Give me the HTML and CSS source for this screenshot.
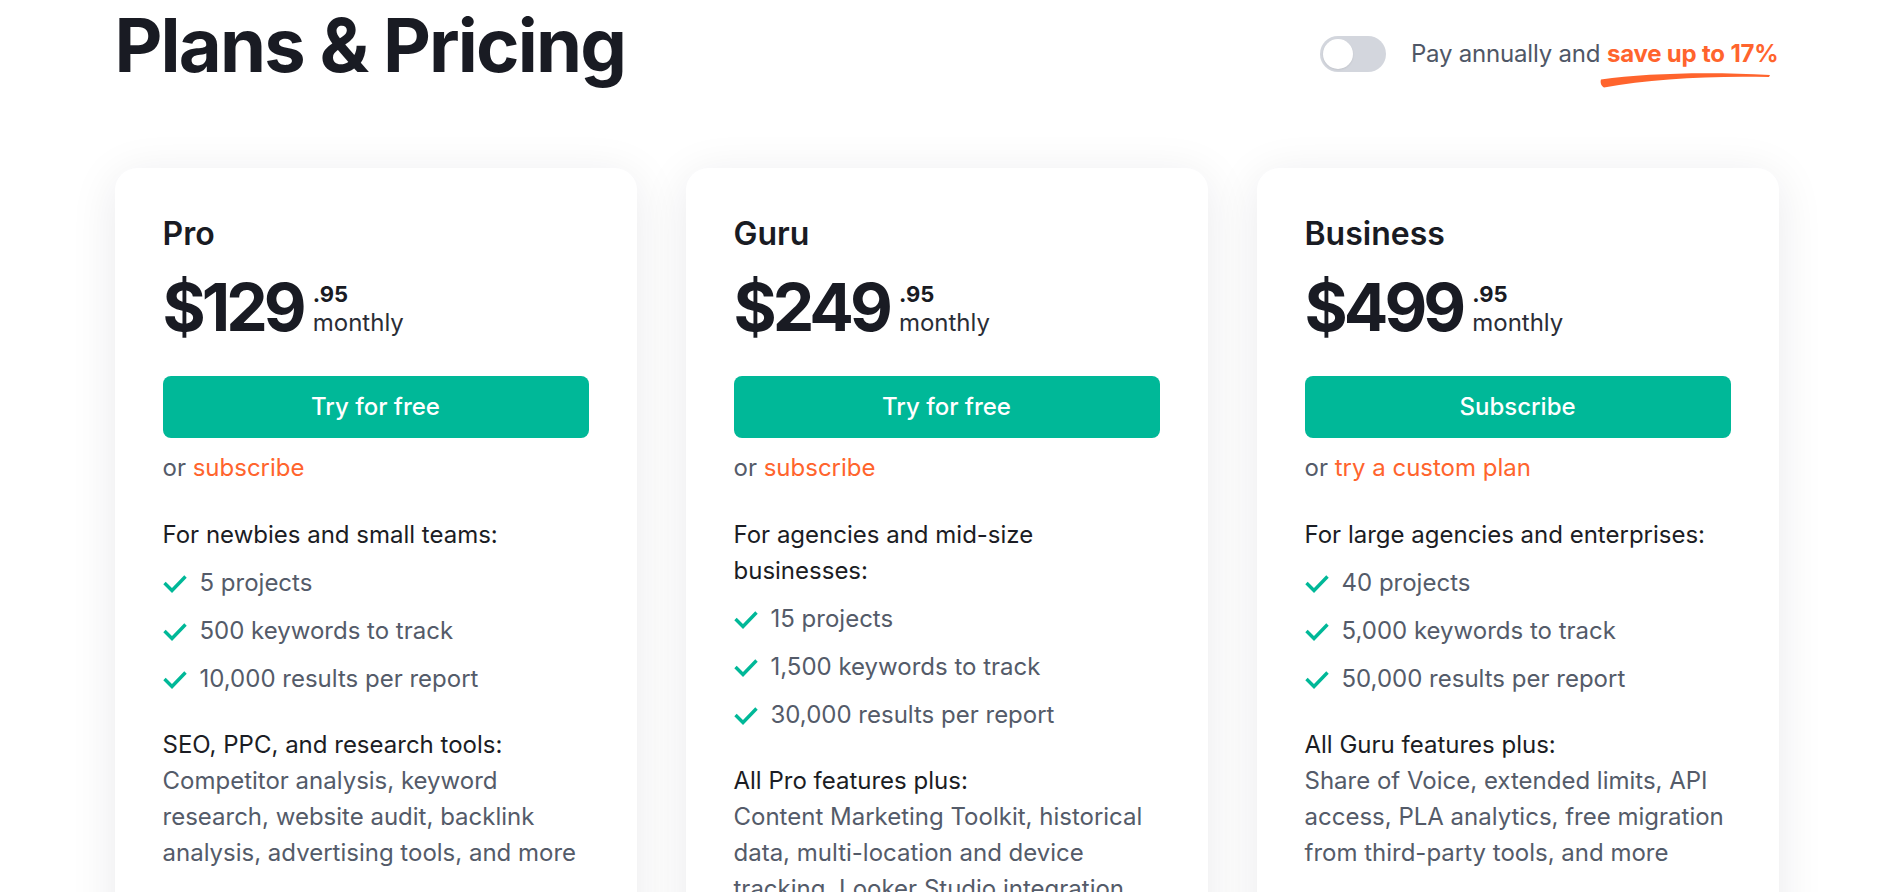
FILE: index.html
```html
<!DOCTYPE html>
<html lang="en">
<head>
<meta charset="utf-8">
<title>Plans &amp; Pricing</title>
<link rel="stylesheet" href="styles.css">
</head>
<body>
<div class="page">
  <header class="header">
    <h1 class="title">Plans &amp; Pricing</h1>
    <div class="billing">
      <span class="switch"><span class="knob"></span></span>
      <span class="billing-text">Pay annually and <span class="save">save up to 17%<svg class="swoosh" viewBox="0 0 170 17" width="170" height="17" aria-hidden="true"><path d="M1 8.5 C 45 2, 110 0.5, 170 4 L 169 6 C 110 4.5, 50 8, 4 16.5 C 1 15, 0 11, 1 8.5 Z" fill="#ff642d"/></svg></span></span>
    </div>
  </header>

  <div class="plans">
    <section class="card">
      <h2 class="plan-name">Pro</h2>
      <div class="price">
        <span class="amount">$129</span>
        <span class="price-side"><span class="cents">.95</span><span class="period">monthly</span></span>
      </div>
      <a class="btn" href="#">Try for free</a>
      <p class="alt">or <a href="#">subscribe</a></p>
      <h3 class="feat-title">For newbies and small teams:</h3>
      <ul class="checks">
        <li><svg class="check" viewBox="0 0 24 19" width="24" height="19"><path d="M1.5 9 L9 16.5 L22.5 2.5"/></svg>5 projects</li>
        <li><svg class="check" viewBox="0 0 24 19" width="24" height="19"><path d="M1.5 9 L9 16.5 L22.5 2.5"/></svg>500 keywords to track</li>
        <li><svg class="check" viewBox="0 0 24 19" width="24" height="19"><path d="M1.5 9 L9 16.5 L22.5 2.5"/></svg>10,000 results per report</li>
      </ul>
      <h3 class="feat-title spaced">SEO, PPC, and research tools:</h3>
      <p class="desc">Competitor analysis, keyword research, website audit, backlink analysis, advertising tools, and more</p>
    </section>

    <section class="card">
      <h2 class="plan-name">Guru</h2>
      <div class="price">
        <span class="amount">$249</span>
        <span class="price-side"><span class="cents">.95</span><span class="period">monthly</span></span>
      </div>
      <a class="btn" href="#">Try for free</a>
      <p class="alt">or <a href="#">subscribe</a></p>
      <h3 class="feat-title">For agencies and mid-size businesses:</h3>
      <ul class="checks">
        <li><svg class="check" viewBox="0 0 24 19" width="24" height="19"><path d="M1.5 9 L9 16.5 L22.5 2.5"/></svg>15 projects</li>
        <li><svg class="check" viewBox="0 0 24 19" width="24" height="19"><path d="M1.5 9 L9 16.5 L22.5 2.5"/></svg>1,500 keywords to track</li>
        <li><svg class="check" viewBox="0 0 24 19" width="24" height="19"><path d="M1.5 9 L9 16.5 L22.5 2.5"/></svg>30,000 results per report</li>
      </ul>
      <h3 class="feat-title spaced">All Pro features plus:</h3>
      <p class="desc">Content Marketing Toolkit, historical data, multi-location and device tracking, Looker Studio integration, and more</p>
    </section>

    <section class="card">
      <h2 class="plan-name">Business</h2>
      <div class="price">
        <span class="amount">$499</span>
        <span class="price-side"><span class="cents">.95</span><span class="period">monthly</span></span>
      </div>
      <a class="btn" href="#">Subscribe</a>
      <p class="alt">or <a href="#">try a custom plan</a></p>
      <h3 class="feat-title">For large agencies and enterprises:</h3>
      <ul class="checks">
        <li><svg class="check" viewBox="0 0 24 19" width="24" height="19"><path d="M1.5 9 L9 16.5 L22.5 2.5"/></svg>40 projects</li>
        <li><svg class="check" viewBox="0 0 24 19" width="24" height="19"><path d="M1.5 9 L9 16.5 L22.5 2.5"/></svg>5,000 keywords to track</li>
        <li><svg class="check" viewBox="0 0 24 19" width="24" height="19"><path d="M1.5 9 L9 16.5 L22.5 2.5"/></svg>50,000 results per report</li>
      </ul>
      <h3 class="feat-title spaced">All Guru features plus:</h3>
      <p class="desc">Share of Voice, extended limits, API access, PLA analytics, free migration from third-party tools, and more</p>
    </section>
  </div>
</div>
</body>
</html>
```

FILE: styles.css
```css
* { box-sizing: border-box; }

html, body {
  margin: 0;
  padding: 0;
  background: #ffffff;
}

body {
  font-family: Inter, "Noto Sans", "Liberation Sans", sans-serif;
  font-size: 24px;
  line-height: 36px;
  color: #545b69;
}

.page {
  width: 1664px;
  margin: 0 auto;
}

.header {
  display: flex;
  justify-content: space-between;
  align-items: flex-start;
  padding-top: 8px;
}

.title {
  margin: 0;
  font-size: 74px;
  line-height: 74px;
  font-weight: 700;
  letter-spacing: -0.025em;
  color: #191b23;
}

.billing {
  display: flex;
  align-items: center;
  gap: 25px;
  margin-top: 28px;
}

.switch {
  position: relative;
  display: block;
  width: 66px;
  height: 36px;
  border-radius: 18px;
  background: #d3d6dd;
}

.knob {
  position: absolute;
  left: 3px;
  top: 3px;
  width: 30px;
  height: 30px;
  border-radius: 50%;
  background: #ffffff;
  box-shadow: 0 1px 2px rgba(0, 0, 0, 0.08);
}

.billing-text {
  line-height: 36px;
  letter-spacing: -0.008em;
  color: #4f5766;
}

.save {
  position: relative;
  display: inline-block;
  font-weight: 700;
  color: #ff642d;
}

.swoosh {
  position: absolute;
  left: -7px;
  top: 35px;
  display: block;
}

.plans {
  display: grid;
  grid-template-columns: repeat(3, 1fr);
  gap: 49px;
  margin-top: 86px;
}

.card {
  background: #ffffff;
  border-radius: 22px;
  padding: 46px 48px 48px;
  box-shadow: 0 8px 48px rgba(16, 24, 40, 0.09);
}

.plan-name {
  margin: 0;
  font-size: 32px;
  line-height: 40px;
  font-weight: 600;
  color: #191b23;
}

.price {
  display: flex;
  align-items: last baseline;
  margin-top: 20px;
}

.amount {
  font-size: 66px;
  line-height: 66px;
  font-weight: 700;
  letter-spacing: -0.06em;
  color: #191b23;
}

.price-side {
  display: flex;
  flex-direction: column;
  margin-left: 10px;
}

.cents {
  font-size: 22px;
  line-height: 24px;
  font-weight: 700;
  color: #191b23;
}

.period {
  font-size: 24px;
  line-height: 34px;
  color: #2a2d36;
}

.btn {
  display: flex;
  align-items: center;
  justify-content: center;
  height: 62px;
  margin-top: 36px;
  border-radius: 8px;
  background: #00b898;
  color: #ffffff;
  font-weight: 500;
  text-decoration: none;
}

.alt {
  margin: 12px 0 0;
  color: #545b69;
}

.alt a {
  color: #ff642d;
  text-decoration: none;
}

.feat-title {
  margin: 31px 0 0;
  font-size: 24px;
  line-height: 36px;
  font-weight: 400;
  color: #1b1d24;
}

.feat-title.spaced {
  margin-top: 30px;
}

.checks {
  list-style: none;
  margin: 12px 0 0;
  padding: 0;
  display: flex;
  flex-direction: column;
  gap: 12px;
}

.checks li {
  display: flex;
  align-items: center;
  gap: 13px;
}

.check {
  flex: none;
  fill: none;
  stroke: #00b898;
  stroke-width: 3.4;
  stroke-linecap: butt;
  stroke-linejoin: miter;
}

.desc {
  margin: 0;
  color: #545b69;
}
```
